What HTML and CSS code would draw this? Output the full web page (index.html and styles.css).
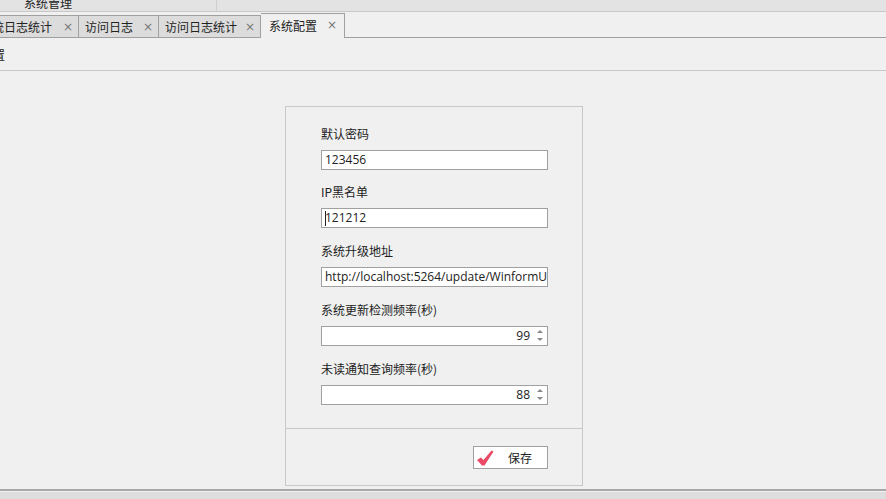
FILE: index.html
```html
<!DOCTYPE html>
<html lang="zh">
<head>
<meta charset="utf-8">
<title>系统配置</title>
<link rel="stylesheet" href="styles.css">
</head>
<body>
<div class="app">
  <div class="menubar">
    <div class="menu-cell"><span class="menu-text">系统管理</span></div>
  </div>
  <div class="tabbar">
    <div class="tab first"><span class="tab-label clip">统日志统计</span><span class="tab-x">×</span></div>
    <div class="tab w79"><span class="tab-label">访问日志</span><span class="tab-x">×</span></div>
    <div class="tab w102"><span class="tab-label">访问日志统计</span><span class="tab-x">×</span></div>
    <div class="tab active"><span class="tab-label">系统配置</span><span class="tab-x">×</span></div>
  </div>
  <div class="crumb"><span class="crumb-text">置</span></div>
  <main class="content">
    <form class="card">
      <div class="fields">
        <div class="field">
          <label class="label">默认密码</label>
          <div class="input">123456</div>
        </div>
        <div class="field">
          <label class="label">IP黑名单</label>
          <div class="input"><span class="caret"></span>121212</div>
        </div>
        <div class="field">
          <label class="label">系统升级地址</label>
          <div class="input clipped">http://localhost:5264/update/WinformU</div>
        </div>
        <div class="field">
          <label class="label">系统更新检测频率(秒)</label>
          <div class="input spin"><span class="spin-val">99</span><span class="arrows"><i class="up"></i><i class="down"></i></span></div>
        </div>
        <div class="field">
          <label class="label">未读通知查询频率(秒)</label>
          <div class="input spin"><span class="spin-val">88</span><span class="arrows"><i class="up"></i><i class="down"></i></span></div>
        </div>
      </div>
      <div class="actions">
        <button class="save" type="button">
          <svg class="check" viewBox="0 0 18 16" width="18" height="16"><path d="M0 10 L4 7.5 L6.5 10 L14.5 0.5 L16.5 1.5 L7.5 15.5 L5 15.5 Z" fill="#ea4a66"/></svg>
          <span class="save-label">保存</span>
        </button>
      </div>
    </form>
  </main>
  <div class="statusbar"></div>
</div>
</body>
</html>
```
FILE: styles.css
```css
html, body { margin: 0; padding: 0; }
body { width: 886px; height: 499px; overflow: hidden; background: #f0f0f0; font-family: "Noto Sans CJK SC", "Liberation Sans", sans-serif; font-size: 12px; color: #222; }
.app { display: flex; flex-direction: column; height: 499px; overflow: hidden; }
.menubar { height: 11px; background: #e3e3e3; border-bottom: 1px solid #c8c8c8; display: flex; flex: none; }
.menu-cell { width: 216px; height: 11px; border-right: 1px solid #cfcfcf; overflow: hidden; }
.menu-text { display: block; margin: -6px 0 0 24px; line-height: 17px; }
.tabbar { height: 25px; flex: none; display: flex; align-items: flex-end; background: #f0f0f0; border-bottom: 1px solid #a0a0a0; }
.tab { height: 22px; box-sizing: border-box; background: #dcdcdc; border: 1px solid #a0a0a0; border-bottom: none; border-left: none; display: flex; align-items: center; justify-content: space-between; padding: 0 5px 0 6px; }
.tab.first { width: 79px; padding-left: 0; overflow: hidden; }
.tab.first .tab-label { margin-left: -8px; }
.tab.w79 { width: 80px; }
.tab.w102 { width: 102px; }
.tab.active { width: 84px; height: 25px; margin-bottom: -1px; background: #f0f0f0; padding: 0 7px 2px 8px; }
.tab-label { white-space: nowrap; }
.tab-x { color: #777; font: 12px "DejaVu Sans", sans-serif; }
.crumb { height: 32px; flex: none; border-bottom: 1px solid #c8c8c8; overflow: hidden; }
.crumb-text { display: block; margin-left: -7px; line-height: 33px; }
.content { flex: 1; display: flex; justify-content: center; align-items: flex-start; padding: 35px 18px 0 0; min-height: 0; box-sizing: border-box; }
.card { width: 298px; height: 380px; box-sizing: border-box; border: 1px solid #c8c8c8; display: flex; flex-direction: column; }
.fields { height: 322px; box-sizing: border-box; border-bottom: 1px solid #c8c8c8; padding: 14.5px 34px 0 35px; }
.field { height: 58.75px; }
.label { display: block; height: 28px; line-height: 24px; }
.input { height: 20px; box-sizing: border-box; background: #fff; border: 1px solid #a0a0a0; padding-left: 3px; font: 12px/18px "Open Sans", "Liberation Sans", sans-serif; color: #222; white-space: nowrap; overflow: hidden; position: relative; }
.caret { position: absolute; left: 3px; top: 2px; width: 1px; height: 15px; background: #222; }
.spin { display: flex; justify-content: flex-end; align-items: center; padding-right: 3px; }
.spin-val { margin-right: 5px; }
.arrows { display: flex; flex-direction: column; gap: 5px; width: 9px; align-items: center; }
.up, .down { display: block; width: 0; height: 0; border-left: 3.5px solid transparent; border-right: 3.5px solid transparent; }
.up { border-bottom: 3px solid #888; }
.down { border-top: 3px solid #888; }
.actions { flex: 1; display: flex; justify-content: flex-end; align-items: flex-start; padding: 17px 34px 0 0; }
.save { width: 75px; height: 23px; box-sizing: border-box; background: #fff; border: 1px solid #a0a0a0; padding: 0 0 0 3px; display: flex; align-items: center; font: inherit; color: #222; }
.check { flex: none; }
.save-label { margin-left: 13px; }
.statusbar { flex: none; height: 8px; background: #dedede; border-top: 2px solid #a8a8a8; box-shadow: inset 0 1px 0 #f0f0f0; }
```
